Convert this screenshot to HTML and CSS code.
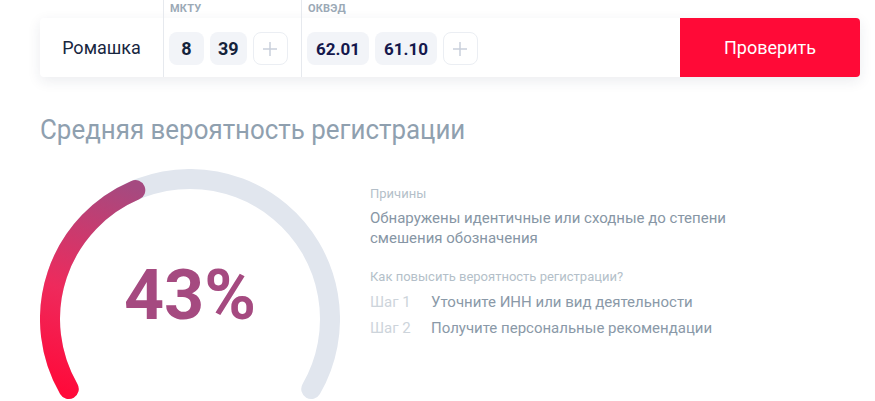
FILE: index.html
```html
<!DOCTYPE html>
<html lang="ru">
<head>
<meta charset="utf-8">
<title>Проверка</title>
<link rel="stylesheet" href="styles.css">
</head>
<body>
<div class="page">
  <div class="search">
    <div class="name">Ромашка</div>
    <div class="group group-mktu">
      <div class="cap">МКТУ</div>
      <div class="chips">
        <span class="chip">8</span>
        <span class="chip">39</span>
        <span class="chip add"><svg width="16" height="16" viewBox="0 0 16 16"><path d="M8 1v14M1 8h14" stroke="#C9D0DB" stroke-width="1.5" fill="none"/></svg></span>
      </div>
    </div>
    <div class="group group-okved">
      <div class="cap">ОКВЭД</div>
      <div class="chips">
        <span class="chip chip-blue">62.01</span>
        <span class="chip chip-blue">61.10</span>
        <span class="chip add"><svg width="16" height="16" viewBox="0 0 16 16"><path d="M8 1v14M1 8h14" stroke="#C9D0DB" stroke-width="1.5" fill="none"/></svg></span>
      </div>
    </div>
    <button class="check">Проверить</button>
  </div>

  <h1 class="title">Средняя вероятность регистрации</h1>

  <div class="result">
    <svg class="gauge" width="300" height="232" viewBox="0 0 300 232">
      <defs>
        <linearGradient id="g" gradientUnits="userSpaceOnUse" x1="30" y1="225" x2="100" y2="20">
          <stop offset="0" stop-color="#FF0A3A"/>
          <stop offset="0.45" stop-color="#EE2A5C"/>
          <stop offset="1" stop-color="#A54A80"/>
        </linearGradient>
      </defs>
      <path d="M28.76 220 A140 140 0 1 1 271.24 220" fill="none" stroke="#E1E6EE" stroke-width="20" stroke-linecap="round"/>
      <path d="M28.76 220 A140 140 0 0 1 95.30 21.13" fill="none" stroke="url(#g)" stroke-width="20" stroke-linecap="round"/>
      <text class="pct" x="150" y="150" text-anchor="middle">43%</text>
    </svg>
    <div class="info">
      <div class="label">Причины</div>
      <div class="reason">Обнаружены идентичные или сходные до степени смешения обозначения</div>
      <div class="label label-how">Как повысить вероятность регистрации?</div>
      <div class="steps">
        <div class="step"><span class="num">Шаг 1</span><span class="text">Уточните ИНН или вид деятельности</span></div>
        <div class="step"><span class="num">Шаг 2</span><span class="text">Получите персональные рекомендации</span></div>
      </div>
    </div>
  </div>
</div>
</body>
</html>
```

FILE: styles.css
```css
html, body {
  margin: 0;
  padding: 0;
  background: #ffffff;
  overflow: hidden;
}

body {
  font-family: Roboto, "Noto Sans", "Liberation Sans", sans-serif;
}

.page {
  width: 820px;
  padding: 18px 0 0 40px;
}

.search {
  display: flex;
  height: 59px;
  background: #ffffff;
  border-radius: 4px;
  box-shadow: 0 4px 14px rgba(30, 45, 80, 0.09);
}

.name {
  width: 123px;
  flex: none;
  display: flex;
  align-items: center;
  justify-content: center;
  font-size: 18px;
  color: #18263F;
}

.group {
  display: flex;
  flex-direction: column;
  border-left: 1px solid #E6E9EE;
}

.group-mktu {
  width: 137px;
  flex: none;
}

.group-okved {
  flex: 1;
}

.cap {
  height: 18px;
  margin: -18px 0 0 -1px;
  border-left: 1px solid #E6E9EE;
  padding-left: 6px;
  font-size: 11px;
  font-weight: 700;
  line-height: 18px;
  color: #9BA9B6;
  letter-spacing: 0.2px;
}

.chips {
  flex: 1;
  display: flex;
  align-items: center;
  gap: 6px;
  padding: 2px 0 0 5px;
}

.chip {
  box-sizing: border-box;
  height: 33px;
  min-width: 35px;
  padding: 0 8px;
  display: inline-flex;
  align-items: center;
  justify-content: center;
  border-radius: 8px;
  background: #F2F4F8;
  font-size: 18px;
  font-weight: 700;
  color: #14233B;
}

.chip-blue {
  color: #15184C;
  font-size: 17px;
  padding: 0 9px;
}

.chip.add {
  background: #ffffff;
  border: 1.5px solid #EBEEF3;
  padding: 0;
}

.check {
  width: 180px;
  flex: none;
  border: 0;
  border-radius: 0 4px 4px 0;
  background: #FF0A37;
  color: #ffffff;
  font-family: Roboto, "Liberation Sans", sans-serif;
  font-size: 18px;
  padding: 0;
}

.title {
  margin: 36px 0 0;
  font-size: 28px;
  line-height: 34px;
  font-weight: 400;
  color: #8FA0AF;
  white-space: nowrap;
  transform: scaleX(0.925);
  transform-origin: left center;
}

.result {
  display: flex;
  gap: 30px;
  margin-top: 22px;
}

.gauge {
  display: block;
  flex: none;
}

.pct {
  font-family: Roboto, "Liberation Sans", sans-serif;
  font-size: 70px;
  font-weight: 700;
  fill: #A54A80;
}

.info {
  margin-top: 17px;
}

.label {
  font-size: 13px;
  line-height: 16px;
  color: #B4BFC9;
}

.reason {
  margin-top: 6px;
  max-width: 370px;
  font-size: 15px;
  line-height: 20px;
  color: #8796A5;
}

.label-how {
  margin-top: 21px;
}

.steps {
  margin-top: 7px;
  display: flex;
  flex-direction: column;
  gap: 6px;
}

.step {
  display: flex;
  font-size: 15px;
  line-height: 20px;
}

.num {
  width: 61px;
  flex: none;
  color: #CDD4DB;
}

.text {
  color: #8A99A8;
}
```
